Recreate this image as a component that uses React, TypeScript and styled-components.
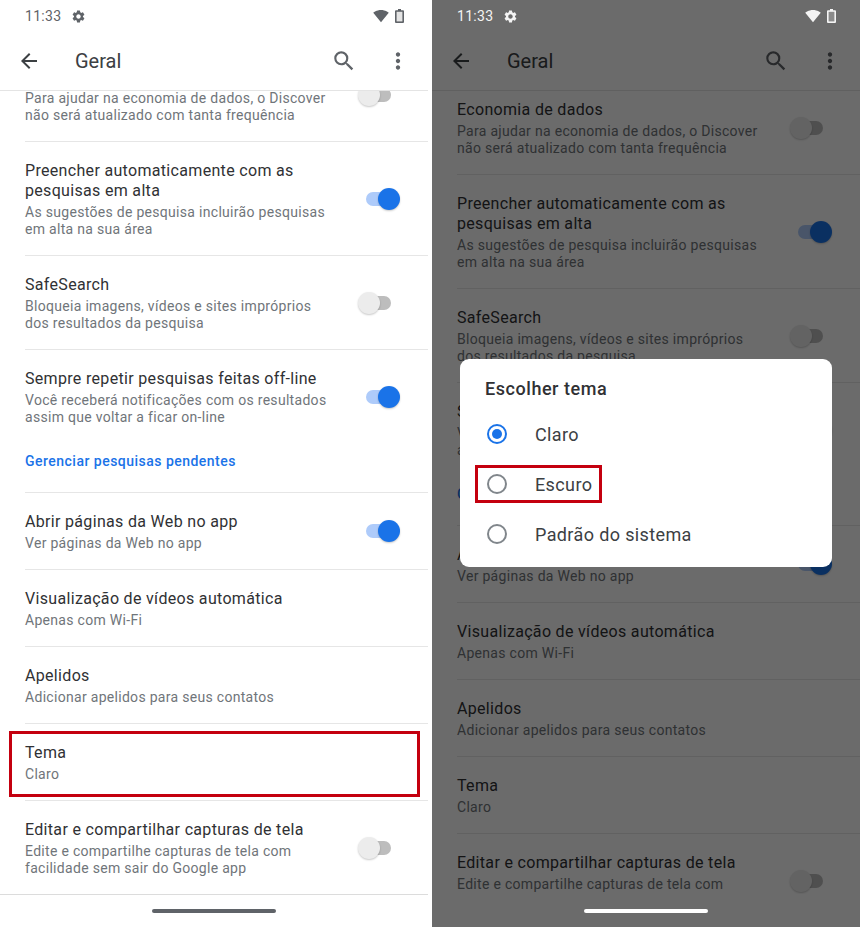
import styled, { createGlobalStyle } from 'styled-components';
import { MdArrowBack, MdMoreVert, MdSearch, MdSettings, MdSignalWifi4Bar } from 'react-icons/md';

const GlobalStyle = createGlobalStyle`
  html, body {
    margin: 0;
    padding: 0;
    background: #fff;
    overflow: hidden;
  }
  * {
    box-sizing: border-box;
  }
`;

const Page = styled.div`
  width: 860px;
  height: 927px;
  display: flex;
  gap: 4px;
  background: #fff;
  font-family: Roboto, "Liberation Sans", sans-serif;
`;

const Phone = styled.div`
  position: relative;
  width: 428px;
  height: 927px;
  display: flex;
  flex-direction: column;
  overflow: hidden;
  background: #fff;
`;

const StatusBar = styled.div<{ $dimmed?: boolean }>`
  position: relative;
  z-index: 3;
  height: 32px;
  flex: none;
  display: flex;
  align-items: center;
  padding: 0 24px 0 25px;
  font-size: 14px;
  letter-spacing: 0.3px;
  color: ${(p) => (p.$dimmed ? '#f4f4f4' : '#5f6368')};
`;

const Clock = styled.span`
  margin-right: 10px;
`;

const StatusRight = styled.div`
  margin-left: auto;
  display: flex;
  align-items: center;
  gap: 6px;
`;

const Toolbar = styled.div`
  height: 59px;
  flex: none;
  display: flex;
  align-items: center;
  padding: 0 17px 0 17px;
  border-bottom: 1px solid #e4e4e4;
  color: #3c4043;
`;

const ToolbarTitle = styled.div`
  margin-left: 34px;
  flex: 1;
  font-size: 20px;
  color: #3c4043;
`;

const ToolbarActions = styled.div`
  display: flex;
  align-items: center;
  gap: 28px;
  color: #5f6368;
`;

const List = styled.div`
  flex: 1;
  min-height: 0;
  overflow: hidden;
`;

const ListInner = styled.div<{ $offset: number }>`
  margin-top: ${(p) => p.$offset}px;
`;

const Row = styled.div`
  position: relative;
  margin-left: 25px;
  padding: 19px 37px 17px 0;
  border-bottom: 1px solid #e6e6e6;
`;

const RowMain = styled.div`
  display: flex;
  align-items: center;
  justify-content: space-between;
`;

const RowText = styled.div`
  min-width: 0;
`;

const Title = styled.div`
  font-size: 16px;
  line-height: 20px;
  letter-spacing: 0.32px;
  color: #303134;
`;

const Sub = styled.div`
  max-width: 306px;
  margin-top: 3px;
  font-size: 14px;
  line-height: 17px;
  letter-spacing: 0.3px;
  color: #70757a;
`;

const LinkText = styled.div`
  margin-top: 27px;
  margin-bottom: 5px;
  font-size: 14px;
  line-height: 17px;
  font-weight: 500;
  letter-spacing: 0.48px;
  color: #1a73e8;
`;

const Track = styled.div<{ $on?: boolean }>`
  position: relative;
  flex: none;
  width: 25px;
  height: 14px;
  border-radius: 7px;
  background: ${(p) => (p.$on ? '#aecbfa' : '#bdbdbd')};
  transform: translateY(-1px);
`;

const Thumb = styled.div<{ $on?: boolean }>`
  position: absolute;
  top: -4px;
  left: ${(p) => (p.$on ? '12px' : '-8px')};
  width: 22px;
  height: 22px;
  border-radius: 50%;
  background: ${(p) => (p.$on ? '#1a73e8' : '#ececec')};
  box-shadow: 0 1px 2px rgba(0, 0, 0, 0.22);
`;

const Highlight = styled.div`
  position: absolute;
  left: -16px;
  top: 7px;
  width: 411px;
  height: 66px;
  border: 3px solid #c4000f;
`;

const NavBar = styled.div`
  position: relative;
  z-index: 3;
  height: 33px;
  flex: none;
  display: flex;
  align-items: center;
  justify-content: center;
`;

const NavLine = styled.div`
  position: absolute;
  inset: 0 0 auto 0;
  height: 1px;
  background: #dcdcdc;
`;

const NavPill = styled.div<{ $dimmed?: boolean }>`
  width: 124px;
  height: 4px;
  border-radius: 2px;
  background: ${(p) => (p.$dimmed ? '#fff' : '#5f6368')};
`;

const Scrim = styled.div`
  position: absolute;
  inset: 0;
  z-index: 2;
  background: rgba(0, 0, 0, 0.58);
`;

const Dialog = styled.div`
  position: absolute;
  z-index: 4;
  left: 28px;
  top: 359px;
  width: 372px;
  height: 208px;
  padding: 18px 25px 0;
  border-radius: 9px;
  background: #fff;
`;

const DialogTitle = styled.div`
  height: 24px;
  margin-bottom: 8px;
  font-size: 18px;
  line-height: 24px;
  font-weight: 500;
  letter-spacing: 0.55px;
  color: #303134;
`;

const Option = styled.div`
  position: relative;
  height: 50px;
  display: flex;
  align-items: center;
  gap: 28px;
  margin-left: 2px;
  font-size: 18px;
  letter-spacing: 0.38px;
  color: #3c4043;
`;

const Radio = styled.div<{ $checked?: boolean }>`
  flex: none;
  width: 20px;
  height: 20px;
  display: flex;
  align-items: center;
  justify-content: center;
  border-radius: 50%;
  border: 2px solid ${(p) => (p.$checked ? '#1a73e8' : '#80868b')};
  &::after {
    content: '';
    width: 10px;
    height: 10px;
    border-radius: 50%;
    background: ${(p) => (p.$checked ? '#1a73e8' : 'transparent')};
  }
`;

const OptionMark = styled.div`
  position: absolute;
  left: -12px;
  top: 6px;
  width: 127px;
  height: 38px;
  border: 3px solid #c4000f;
`;

type Setting = {
  title: string;
  sub: string;
  toggle?: 'on' | 'off';
  link?: string;
  marked?: boolean;
};

const settings: Setting[] = [
  {
    title: 'Economia de dados',
    sub: 'Para ajudar na economia de dados, o Discover não será atualizado com tanta frequência',
    toggle: 'off',
  },
  {
    title: 'Preencher automaticamente com as pesquisas em alta',
    sub: 'As sugestões de pesquisa incluirão pesquisas em alta na sua área',
    toggle: 'on',
  },
  {
    title: 'SafeSearch',
    sub: 'Bloqueia imagens, vídeos e sites impróprios dos resultados da pesquisa',
    toggle: 'off',
  },
  {
    title: 'Sempre repetir pesquisas feitas off-line',
    sub: 'Você receberá notificações com os resultados assim que voltar a ficar on-line',
    toggle: 'on',
    link: 'Gerenciar pesquisas pendentes',
  },
  { title: 'Abrir páginas da Web no app', sub: 'Ver páginas da Web no app', toggle: 'on' },
  { title: 'Visualização de vídeos automática', sub: 'Apenas com Wi-Fi' },
  { title: 'Apelidos', sub: 'Adicionar apelidos para seus contatos' },
  { title: 'Tema', sub: 'Claro', marked: true },
  {
    title: 'Editar e compartilhar capturas de tela',
    sub: 'Edite e compartilhe capturas de tela com facilidade sem sair do Google app',
    toggle: 'off',
  },
];

function BatteryIcon({ dimmed }: { dimmed?: boolean }) {
  return (
    <svg width="9" height="14" viewBox="0 0 9 14">
      <path d="M3 0h3v1.2h2a1 1 0 0 1 1 1V13a1 1 0 0 1-1 1H1a1 1 0 0 1-1-1V2.2a1 1 0 0 1 1-1h2z" fill="currentColor" />
      <rect x="1.6" y="2.8" width="5.8" height="9.6" fill={dimmed ? '#8a8a8a' : '#e4e4e4'} />
    </svg>
  );
}

function SettingRow({ item, showMark }: { item: Setting; showMark: boolean }) {
  return (
    <Row>
      <RowMain>
        <RowText>
          <Title>{item.title}</Title>
          <Sub>{item.sub}</Sub>
        </RowText>
        {item.toggle && (
          <Track $on={item.toggle === 'on'}>
            <Thumb $on={item.toggle === 'on'} />
          </Track>
        )}
      </RowMain>
      {item.link && <LinkText>{item.link}</LinkText>}
      {item.marked && showMark && <Highlight />}
    </Row>
  );
}

function Screen({ dimmed, offset }: { dimmed?: boolean; offset: number }) {
  return (
    <Phone>
      <StatusBar $dimmed={dimmed}>
        <Clock>11:33</Clock>
        <MdSettings size={15} />
        <StatusRight>
          <MdSignalWifi4Bar size={16} />
          <BatteryIcon dimmed={dimmed} />
        </StatusRight>
      </StatusBar>
      <Toolbar>
        <MdArrowBack size={24} />
        <ToolbarTitle>Geral</ToolbarTitle>
        <ToolbarActions>
          <MdSearch size={26} />
          <MdMoreVert size={26} />
        </ToolbarActions>
      </Toolbar>
      <List>
        <ListInner $offset={offset}>
          {settings.map((item) => (
            <SettingRow key={item.title} item={item} showMark={!dimmed} />
          ))}
        </ListInner>
      </List>
      <NavBar>
        {!dimmed && <NavLine />}
        <NavPill $dimmed={dimmed} />
      </NavBar>
      {dimmed && (
        <>
          <Scrim />
          <Dialog>
            <DialogTitle>Escolher tema</DialogTitle>
            <Option>
              <Radio $checked />
              Claro
            </Option>
            <Option>
              <Radio />
              Escuro
              <OptionMark />
            </Option>
            <Option>
              <Radio />
              Padrão do sistema
            </Option>
          </Dialog>
        </>
      )}
    </Phone>
  );
}

export default function App() {
  return (
    <Page>
      <GlobalStyle />
      <Screen offset={-43} />
      <Screen dimmed offset={-10} />
    </Page>
  );
}
